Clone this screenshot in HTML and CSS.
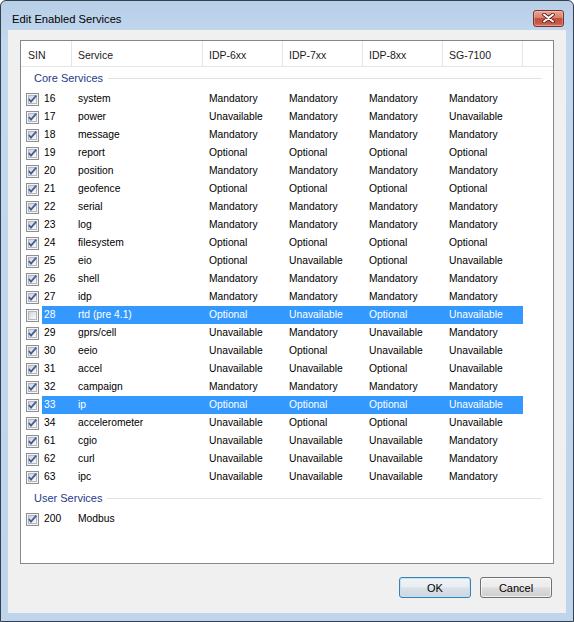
FILE: index.html
```html
<!DOCTYPE html>
<html>
<head>
<meta charset="utf-8">
<link rel="stylesheet" href="styles.css">
</head>
<body>
<div class="window">
  <div class="titlebar">
    <span class="title">Edit Enabled Services</span>
    <span class="close"><svg width="13" height="10" viewBox="0 0 13 10"><path d="M2 1.5 L11 8.5 M11 1.5 L2 8.5" stroke="#5b2017" stroke-width="3.6" stroke-linecap="round" fill="none"/><path d="M2 1.5 L11 8.5 M11 1.5 L2 8.5" stroke="#ffffff" stroke-width="2" stroke-linecap="round" fill="none"/></svg></span>
  </div>
  <div class="client">
    <div class="listbox">
      <div class="header">
        <span class="h h-sin">SIN</span>
        <span class="h h-svc">Service</span>
        <span class="h h-col">IDP-6xx</span>
        <span class="h h-col">IDP-7xx</span>
        <span class="h h-col">IDP-8xx</span>
        <span class="h h-col">SG-7100</span>
        <span class="h h-rest"></span>
      </div>
      <div class="group"><span class="group-title">Core Services</span><span class="group-line"></span></div>

      <div class="row"><span class="chk"><span class="cb"><span class="cb-in"><svg class="tick" width="7" height="7" viewBox="0 0 7 7"><path d="M-0.2 3 L2 5.6 L7.2 -0.4" stroke="#3f5c9a" stroke-width="1.7" fill="none"/></svg></span></span></span><div class="cells"><span class="c sin">16</span><span class="c svc">system</span><span class="c">Mandatory</span><span class="c">Mandatory</span><span class="c">Mandatory</span><span class="c">Mandatory</span></div></div>
      <div class="row"><span class="chk"><span class="cb"><span class="cb-in"><svg class="tick" width="7" height="7" viewBox="0 0 7 7"><path d="M-0.2 3 L2 5.6 L7.2 -0.4" stroke="#3f5c9a" stroke-width="1.7" fill="none"/></svg></span></span></span><div class="cells"><span class="c sin">17</span><span class="c svc">power</span><span class="c">Unavailable</span><span class="c">Mandatory</span><span class="c">Mandatory</span><span class="c">Unavailable</span></div></div>
      <div class="row"><span class="chk"><span class="cb"><span class="cb-in"><svg class="tick" width="7" height="7" viewBox="0 0 7 7"><path d="M-0.2 3 L2 5.6 L7.2 -0.4" stroke="#3f5c9a" stroke-width="1.7" fill="none"/></svg></span></span></span><div class="cells"><span class="c sin">18</span><span class="c svc">message</span><span class="c">Mandatory</span><span class="c">Mandatory</span><span class="c">Mandatory</span><span class="c">Mandatory</span></div></div>
      <div class="row"><span class="chk"><span class="cb"><span class="cb-in"><svg class="tick" width="7" height="7" viewBox="0 0 7 7"><path d="M-0.2 3 L2 5.6 L7.2 -0.4" stroke="#3f5c9a" stroke-width="1.7" fill="none"/></svg></span></span></span><div class="cells"><span class="c sin">19</span><span class="c svc">report</span><span class="c">Optional</span><span class="c">Optional</span><span class="c">Optional</span><span class="c">Optional</span></div></div>
      <div class="row"><span class="chk"><span class="cb"><span class="cb-in"><svg class="tick" width="7" height="7" viewBox="0 0 7 7"><path d="M-0.2 3 L2 5.6 L7.2 -0.4" stroke="#3f5c9a" stroke-width="1.7" fill="none"/></svg></span></span></span><div class="cells"><span class="c sin">20</span><span class="c svc">position</span><span class="c">Mandatory</span><span class="c">Mandatory</span><span class="c">Mandatory</span><span class="c">Mandatory</span></div></div>
      <div class="row"><span class="chk"><span class="cb"><span class="cb-in"><svg class="tick" width="7" height="7" viewBox="0 0 7 7"><path d="M-0.2 3 L2 5.6 L7.2 -0.4" stroke="#3f5c9a" stroke-width="1.7" fill="none"/></svg></span></span></span><div class="cells"><span class="c sin">21</span><span class="c svc">geofence</span><span class="c">Optional</span><span class="c">Optional</span><span class="c">Optional</span><span class="c">Optional</span></div></div>
      <div class="row"><span class="chk"><span class="cb"><span class="cb-in"><svg class="tick" width="7" height="7" viewBox="0 0 7 7"><path d="M-0.2 3 L2 5.6 L7.2 -0.4" stroke="#3f5c9a" stroke-width="1.7" fill="none"/></svg></span></span></span><div class="cells"><span class="c sin">22</span><span class="c svc">serial</span><span class="c">Mandatory</span><span class="c">Mandatory</span><span class="c">Mandatory</span><span class="c">Mandatory</span></div></div>
      <div class="row"><span class="chk"><span class="cb"><span class="cb-in"><svg class="tick" width="7" height="7" viewBox="0 0 7 7"><path d="M-0.2 3 L2 5.6 L7.2 -0.4" stroke="#3f5c9a" stroke-width="1.7" fill="none"/></svg></span></span></span><div class="cells"><span class="c sin">23</span><span class="c svc">log</span><span class="c">Mandatory</span><span class="c">Mandatory</span><span class="c">Mandatory</span><span class="c">Mandatory</span></div></div>
      <div class="row"><span class="chk"><span class="cb"><span class="cb-in"><svg class="tick" width="7" height="7" viewBox="0 0 7 7"><path d="M-0.2 3 L2 5.6 L7.2 -0.4" stroke="#3f5c9a" stroke-width="1.7" fill="none"/></svg></span></span></span><div class="cells"><span class="c sin">24</span><span class="c svc">filesystem</span><span class="c">Optional</span><span class="c">Optional</span><span class="c">Optional</span><span class="c">Optional</span></div></div>
      <div class="row"><span class="chk"><span class="cb"><span class="cb-in"><svg class="tick" width="7" height="7" viewBox="0 0 7 7"><path d="M-0.2 3 L2 5.6 L7.2 -0.4" stroke="#3f5c9a" stroke-width="1.7" fill="none"/></svg></span></span></span><div class="cells"><span class="c sin">25</span><span class="c svc">eio</span><span class="c">Optional</span><span class="c">Unavailable</span><span class="c">Optional</span><span class="c">Unavailable</span></div></div>
      <div class="row"><span class="chk"><span class="cb"><span class="cb-in"><svg class="tick" width="7" height="7" viewBox="0 0 7 7"><path d="M-0.2 3 L2 5.6 L7.2 -0.4" stroke="#3f5c9a" stroke-width="1.7" fill="none"/></svg></span></span></span><div class="cells"><span class="c sin">26</span><span class="c svc">shell</span><span class="c">Mandatory</span><span class="c">Mandatory</span><span class="c">Mandatory</span><span class="c">Mandatory</span></div></div>
      <div class="row"><span class="chk"><span class="cb"><span class="cb-in"><svg class="tick" width="7" height="7" viewBox="0 0 7 7"><path d="M-0.2 3 L2 5.6 L7.2 -0.4" stroke="#3f5c9a" stroke-width="1.7" fill="none"/></svg></span></span></span><div class="cells"><span class="c sin">27</span><span class="c svc">idp</span><span class="c">Mandatory</span><span class="c">Mandatory</span><span class="c">Mandatory</span><span class="c">Mandatory</span></div></div>
      <div class="row"><span class="chk"><span class="cb"><span class="cb-in"></span></span></span><div class="cells selected"><span class="c sin">28</span><span class="c svc">rtd (pre 4.1)</span><span class="c">Optional</span><span class="c">Unavailable</span><span class="c">Optional</span><span class="c">Unavailable</span></div></div>
      <div class="row"><span class="chk"><span class="cb"><span class="cb-in"><svg class="tick" width="7" height="7" viewBox="0 0 7 7"><path d="M-0.2 3 L2 5.6 L7.2 -0.4" stroke="#3f5c9a" stroke-width="1.7" fill="none"/></svg></span></span></span><div class="cells"><span class="c sin">29</span><span class="c svc">gprs/cell</span><span class="c">Unavailable</span><span class="c">Mandatory</span><span class="c">Unavailable</span><span class="c">Mandatory</span></div></div>
      <div class="row"><span class="chk"><span class="cb"><span class="cb-in"><svg class="tick" width="7" height="7" viewBox="0 0 7 7"><path d="M-0.2 3 L2 5.6 L7.2 -0.4" stroke="#3f5c9a" stroke-width="1.7" fill="none"/></svg></span></span></span><div class="cells"><span class="c sin">30</span><span class="c svc">eeio</span><span class="c">Unavailable</span><span class="c">Optional</span><span class="c">Unavailable</span><span class="c">Unavailable</span></div></div>
      <div class="row"><span class="chk"><span class="cb"><span class="cb-in"><svg class="tick" width="7" height="7" viewBox="0 0 7 7"><path d="M-0.2 3 L2 5.6 L7.2 -0.4" stroke="#3f5c9a" stroke-width="1.7" fill="none"/></svg></span></span></span><div class="cells"><span class="c sin">31</span><span class="c svc">accel</span><span class="c">Unavailable</span><span class="c">Unavailable</span><span class="c">Optional</span><span class="c">Unavailable</span></div></div>
      <div class="row"><span class="chk"><span class="cb"><span class="cb-in"><svg class="tick" width="7" height="7" viewBox="0 0 7 7"><path d="M-0.2 3 L2 5.6 L7.2 -0.4" stroke="#3f5c9a" stroke-width="1.7" fill="none"/></svg></span></span></span><div class="cells"><span class="c sin">32</span><span class="c svc">campaign</span><span class="c">Mandatory</span><span class="c">Mandatory</span><span class="c">Mandatory</span><span class="c">Mandatory</span></div></div>
      <div class="row"><span class="chk"><span class="cb"><span class="cb-in"><svg class="tick" width="7" height="7" viewBox="0 0 7 7"><path d="M-0.2 3 L2 5.6 L7.2 -0.4" stroke="#3f5c9a" stroke-width="1.7" fill="none"/></svg></span></span></span><div class="cells selected"><span class="c sin">33</span><span class="c svc">ip</span><span class="c">Optional</span><span class="c">Optional</span><span class="c">Optional</span><span class="c">Unavailable</span></div></div>
      <div class="row"><span class="chk"><span class="cb"><span class="cb-in"><svg class="tick" width="7" height="7" viewBox="0 0 7 7"><path d="M-0.2 3 L2 5.6 L7.2 -0.4" stroke="#3f5c9a" stroke-width="1.7" fill="none"/></svg></span></span></span><div class="cells"><span class="c sin">34</span><span class="c svc">accelerometer</span><span class="c">Unavailable</span><span class="c">Optional</span><span class="c">Optional</span><span class="c">Unavailable</span></div></div>
      <div class="row"><span class="chk"><span class="cb"><span class="cb-in"><svg class="tick" width="7" height="7" viewBox="0 0 7 7"><path d="M-0.2 3 L2 5.6 L7.2 -0.4" stroke="#3f5c9a" stroke-width="1.7" fill="none"/></svg></span></span></span><div class="cells"><span class="c sin">61</span><span class="c svc">cgio</span><span class="c">Unavailable</span><span class="c">Unavailable</span><span class="c">Unavailable</span><span class="c">Mandatory</span></div></div>
      <div class="row"><span class="chk"><span class="cb"><span class="cb-in"><svg class="tick" width="7" height="7" viewBox="0 0 7 7"><path d="M-0.2 3 L2 5.6 L7.2 -0.4" stroke="#3f5c9a" stroke-width="1.7" fill="none"/></svg></span></span></span><div class="cells"><span class="c sin">62</span><span class="c svc">curl</span><span class="c">Unavailable</span><span class="c">Unavailable</span><span class="c">Unavailable</span><span class="c">Mandatory</span></div></div>
      <div class="row"><span class="chk"><span class="cb"><span class="cb-in"><svg class="tick" width="7" height="7" viewBox="0 0 7 7"><path d="M-0.2 3 L2 5.6 L7.2 -0.4" stroke="#3f5c9a" stroke-width="1.7" fill="none"/></svg></span></span></span><div class="cells"><span class="c sin">63</span><span class="c svc">ipc</span><span class="c">Unavailable</span><span class="c">Unavailable</span><span class="c">Unavailable</span><span class="c">Mandatory</span></div></div>

      <div class="group group-user"><span class="group-title">User Services</span><span class="group-line"></span></div>
      <div class="row"><span class="chk"><span class="cb"><span class="cb-in"><svg class="tick" width="7" height="7" viewBox="0 0 7 7"><path d="M-0.2 3 L2 5.6 L7.2 -0.4" stroke="#3f5c9a" stroke-width="1.7" fill="none"/></svg></span></span></span><div class="cells"><span class="c sin">200</span><span class="c svc">Modbus</span><span class="c"></span><span class="c"></span><span class="c"></span><span class="c"></span></div></div>
    </div>
    <div class="buttons">
      <button class="btn btn-default">OK</button>
      <button class="btn">Cancel</button>
    </div>
  </div>
</div>
</body>
</html>
```
FILE: styles.css
```css
* { box-sizing: border-box; }
html, body { margin: 0; padding: 0; }
body {
  width: 574px;
  height: 622px;
  overflow: hidden;
  background: #ffffff;
  font-family: "Liberation Sans", Arial, sans-serif;
}
.window {
  width: 574px;
  height: 622px;
  border: 1px solid #34404e;
  border-radius: 6px 6px 0 0;
  background: linear-gradient(#b8cfe8, #c3d8ee 40px, #bfd5ec);
  display: flex;
  flex-direction: column;
  padding: 0 7px 8px 7px;
}
.titlebar {
  height: 29px;
  flex: none;
  display: flex;
  align-items: center;
  padding: 5px 2px 0 4px;
}
.title {
  flex: 1;
  font-size: 11.2px;
  color: #000;
  padding-top: 1px;
}
.close {
  width: 31px;
  height: 17px;
  border: 1px solid #7d3327;
  border-radius: 3px;
  background: linear-gradient(#e8a795, #d7806f 45%, #c4503e 50%, #c65b49 85%, #d88473);
  display: flex;
  align-items: center;
  justify-content: center;
  box-shadow: inset 0 0 0 1px rgba(255,255,255,0.25);
}
.close svg { display: block; }
.client {
  flex: 1;
  background: #f0f0f0;
  padding: 10px 12px 0 12px;
  display: flex;
  flex-direction: column;
}
.listbox {
  height: 524px;
  flex: none;
  border: 1px solid #828790;
  background: #ffffff;
  font-size: 10.3px;
  color: #000;
}
.header {
  height: 26px;
  display: flex;
  border-bottom: 1px solid #e5e5e5;
}
.h {
  display: flex;
  align-items: center;
  padding-top: 2px;
  padding-left: 6px;
  border-right: 1px solid #e5e5e5;
  font-size: 10.5px;
  color: #1a1a1a;
}
.h-sin { width: 51px; padding-left: 7px; }
.h-svc { width: 131px; }
.h-col { width: 80px; }
.h-rest { flex: 1; border-right: none; }
.group {
  height: 23px;
  display: flex;
  align-items: center;
  padding-left: 13px;
  padding-bottom: 2px;
}
.group-user { margin-top: 1px; }
.group-title {
  font-size: 11px;
  color: #1e3a8c;
}
.group-line {
  flex: 1;
  height: 1px;
  background: #e2e2e2;
  margin: 1px 11px 0 5px;
}
.row {
  height: 18px;
  display: flex;
  line-height: 18px;
}
.chk {
  width: 21px;
  display: flex;
  align-items: center;
  padding-left: 5px;
}
.cb {
  width: 13px;
  height: 13px;
  border: 1px solid #8e8f8f;
  background: #f4f4f4;
  padding: 1px;
  display: flex;
}
.cb-in {
  width: 9px;
  height: 9px;
  border: 1px solid #b4b8bd;
  background: linear-gradient(135deg, #cfd3d8, #eef0f2 70%, #f8f8f8);
  display: flex;
}
.tick { display: block; overflow: visible; }
.cells {
  display: flex;
  width: 481px;
}
.cells.selected {
  background: #3399ff;
  color: #ffffff;
}
.c {
  width: 80px;
  padding-left: 6px;
  white-space: nowrap;
}
.c.sin { width: 30px; padding-left: 2px; }
.c.svc { width: 131px; }
.buttons {
  display: flex;
  justify-content: flex-end;
  gap: 9px;
  margin-top: 13px;
  padding-right: 2px;
}
.btn {
  width: 72px;
  height: 21px;
  border: 1px solid #707070;
  border-radius: 3px;
  background: linear-gradient(#f2f2f2, #ebebeb 49%, #dddddd 51%, #cfcfcf);
  font-family: "Liberation Sans", Arial, sans-serif;
  font-size: 11px;
  color: #000;
  padding: 0;
  box-shadow: inset 0 0 0 1px rgba(255,255,255,0.7);
}
.btn-default {
  border-color: #3c7fb1;
  box-shadow: inset 0 0 0 1px #bfe3f6;
  background: linear-gradient(#f1f4f6, #e8edf1 49%, #d9e1e7 51%, #cdd7de);
}
```
